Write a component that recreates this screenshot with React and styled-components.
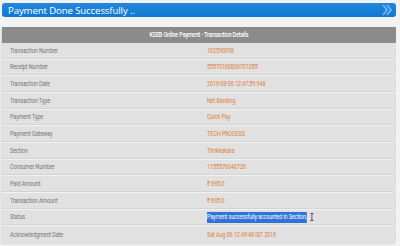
import React from "react";
import styled, { createGlobalStyle } from "styled-components";

const Global = createGlobalStyle`
  html, body { margin: 0; padding: 0; background: #f3f3f3; }
  body { font-family: "Open Sans", "Liberation Sans", sans-serif; }
`;

const Page = styled.div`
  width: 400px;
  height: 246px;
  box-sizing: border-box;
  padding: 3px 4px 0 2px;
  display: flex;
  flex-direction: column;
  gap: 10px;
  overflow: hidden;
`;

const Banner = styled.div`
  height: 14px;
  border-radius: 3px;
  background: linear-gradient(#2387dc, #0f78d2);
  display: flex;
  align-items: center;
  justify-content: space-between;
  padding: 0 4px 0 6px;
  color: #fff;
  font-size: 9.6px;
  letter-spacing: -0.1px;
`;

const Chevrons = styled.svg`
  width: 10px;
  height: 12px;
`;

const Table = styled.div`
  display: flex;
  flex-direction: column;
  background: #e1e1e1;
  box-shadow: -1px 1px 2px rgba(0, 0, 0, 0.12);
  padding-right: 3px;
  font-family: Roboto, "Open Sans", sans-serif;
`;

const Header = styled.div`
  height: 16px;
  margin-right: -3px;
  background: #8b8b8b;
  color: #fff;
  font-size: 6.9px;
  font-weight: 500;
  letter-spacing: -0.2px;
  display: flex;
  align-items: center;
  justify-content: center;
`;

const Condensed = styled.span`
  display: inline-flex;
  align-items: center;
  white-space: nowrap;
  transform: scaleX(${(p) => p.$scale || 0.8});
  transform-origin: ${(p) => (p.$center ? "center" : "left")} center;
`;

const Rows = styled.div`
  display: grid;
  grid-template-rows: repeat(12, 1fr);
  height: 200px;
`;

const Row = styled.div`
  display: grid;
  grid-template-columns: 205px 1fr;
  align-items: center;
  border-bottom: 1px solid #f2f2f2;
  box-shadow: inset 0 -1px 0 #d3d3d3;
  font-size: 6.9px;
  letter-spacing: -0.15px;
  &:last-child { border-bottom: none; box-shadow: none; }
`;

const Label = styled.div`
  color: #777;
  padding-left: 8px;
`;

const Value = styled.div`
  color: #e0803c;
  display: flex;
  align-items: center;
`;

const Selected = styled.span`
  background: #2f73d8;
  color: #fff;
  padding: 1.5px 0;
`;

const Cursor = styled.svg`
  width: 5px;
  height: 8px;
  margin-left: 4px;
`;

const data = [
  ["Transaction Number", "102590098"],
  ["Receipt Number", "55570160806701055"],
  ["Transaction Date", "2016-08-06 12:47:59.948"],
  ["Transaction Type", "Net Banking"],
  ["Payment Type", "Quick Pay"],
  ["Payment Gateway", "TECH PROCESS"],
  ["Section", "Thrikkakara"],
  ["Consumer Number", "1155576048726"],
  ["Paid Amount", "₹ 695.0"],
  ["Transaction Amount", "₹ 695.0"],
  ["Status", "__status__"],
  ["Acknowledgment Date", "Sat Aug 06 12:49:48 IST 2016"],
];

export default function App() {
  return (
    <>
      <Global />
      <Page>
        <Banner>
          <span>Payment Done Successfully ..</span>
          <Chevrons viewBox="0 0 10 12">
            <path d="M1 1 L5 6 L1 11 M5 1 L9 6 L5 11" fill="none" stroke="#6fb4ee" strokeWidth="1.8" />
          </Chevrons>
        </Banner>
        <Table>
          <Header>
            <Condensed $center>KSEB Online Payment - Transaction Details</Condensed>
          </Header>
          <Rows>
            {data.map(([k, v]) => (
              <Row key={k}>
                <Label>
                  <Condensed>{k}</Condensed>
                </Label>
                <Value>
                  {v === "__status__" ? (
                    <Condensed $scale={0.78}>
                      <Selected>Payment successfully accounted in Section.</Selected>
                      <Cursor viewBox="0 0 5 8">
                        <path d="M0.5 0.5 H4.5 M2.5 0.5 V7.5 M0.5 7.5 H4.5" stroke="#333" strokeWidth="0.9" fill="none" />
                      </Cursor>
                    </Condensed>
                  ) : (
                    <Condensed>{v}</Condensed>
                  )}
                </Value>
              </Row>
            ))}
          </Rows>
        </Table>
      </Page>
    </>
  );
}
